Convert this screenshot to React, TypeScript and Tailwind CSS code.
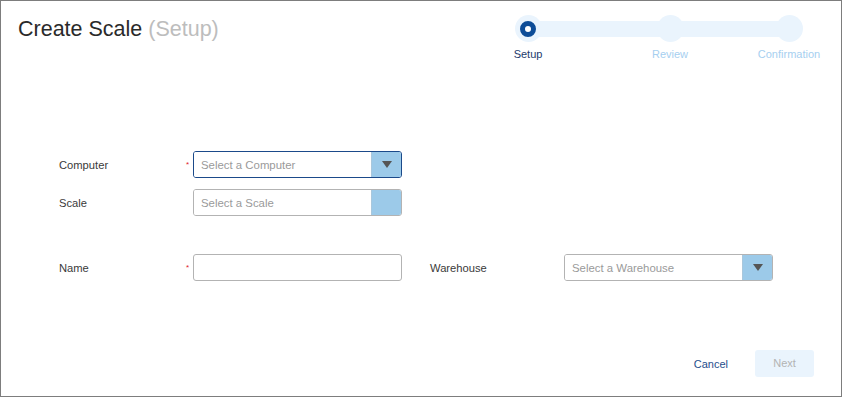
import React from "react";

const font = { fontFamily: '"Liberation Sans", Arial, sans-serif' };

function Arrow() {
  return (
    <svg width="10" height="7" viewBox="0 0 10 7">
      <polygon points="0,0 10,0 5,7" fill="#555555" />
    </svg>
  );
}

function SelectBox({ placeholder, focused, arrow }: { placeholder: string; focused?: boolean; arrow?: boolean }) {
  return (
    <div
      className={`flex h-[27px] w-[209px] rounded-[3px] border overflow-hidden ${
        focused ? "border-[#1b4a8a]" : "border-[#b3b3b3]"
      }`}
    >
      <div className="flex flex-1 items-center bg-white pl-[7px] pt-[4px] text-[11.4px] text-[#9a9a9a]">{placeholder}</div>
      <div className="flex w-[30px] items-center justify-center bg-[#9ccae9] border-l border-[#a9c7dc]">
        {arrow && <Arrow />}
      </div>
    </div>
  );
}

function Label({ text, required }: { text: string; required?: boolean }) {
  return (
    <div className="flex w-[134px] items-center justify-between pr-[4px] pt-[2px] text-[11.2px] text-[#3a3a3a]">
      <span>{text}</span>
      {required && <span className="text-[8px] leading-none text-[#e0202a]">*</span>}
    </div>
  );
}

export default function App() {
  return (
    <div style={font} className="w-[842px] h-[397px] bg-white border border-[#7d7d7d] flex flex-col">
      <div className="flex justify-between">
        <div className="pl-[17px] pt-[15px] text-[21.5px] leading-[26px] text-[#2a2a2a]">
          Create Scale <span className="text-[#bdbdbd]">(Setup)</span>
        </div>
        <div className="relative mr-[20px] mt-[14px] flex items-start">
          <div className="absolute left-[14px] right-[32px] top-[6px] h-[16px] bg-[#eaf4fd]" />
          <div className="relative flex w-[28px] flex-col items-center">
            <div className="flex h-[27px] w-[27px] items-center justify-center rounded-full bg-[#eaf4fd]">
              <div className="h-[16px] w-[16px] rounded-full border-[5px] border-[#0d4c97] bg-white" />
            </div>
            <div className="mt-[4px] whitespace-nowrap text-[11px] text-[#1d3b6c]">Setup</div>
          </div>
          <div className="relative ml-[110px] flex w-[36px] flex-col items-center">
            <div className="h-[27px] w-[27px] rounded-full bg-[#eaf4fd]" />
            <div className="mt-[4px] whitespace-nowrap text-[11px] text-[#a6cff0]">Review</div>
          </div>
          <div className="relative ml-[69px] flex w-[64px] flex-col items-center">
            <div className="h-[27px] w-[27px] rounded-full bg-[#eaf4fd]" />
            <div className="mt-[4px] whitespace-nowrap text-[11px] text-[#a6cff0]">Confirmation</div>
          </div>
        </div>
      </div>

      <div className="mt-[88px] ml-[58px] flex flex-col">
        <div className="flex">
          <Label text="Computer" required />
          <SelectBox placeholder="Select a Computer" focused arrow />
        </div>
        <div className="mt-[11px] flex">
          <Label text="Scale" />
          <SelectBox placeholder="Select a Scale" />
        </div>
        <div className="mt-[38px] flex">
          <Label text="Name" required />
          <div className="h-[27px] w-[209px] rounded-[3px] border border-[#b3b3b3] bg-white" />
          <div className="ml-[28px] flex">
            <Label text="Warehouse" />
            <SelectBox placeholder="Select a Warehouse" arrow />
          </div>
        </div>
      </div>

      <div className="mt-auto mb-[19px] mr-[27px] flex items-center justify-end gap-[27px]">
        <button className="pt-[2px] text-[11px] text-[#1f4e8c]">Cancel</button>
        <button className="h-[27px] w-[59px] rounded-[3px] bg-[#eaf4fd] text-[11px] text-[#b3b3b3]">Next</button>
      </div>
    </div>
  );
}
